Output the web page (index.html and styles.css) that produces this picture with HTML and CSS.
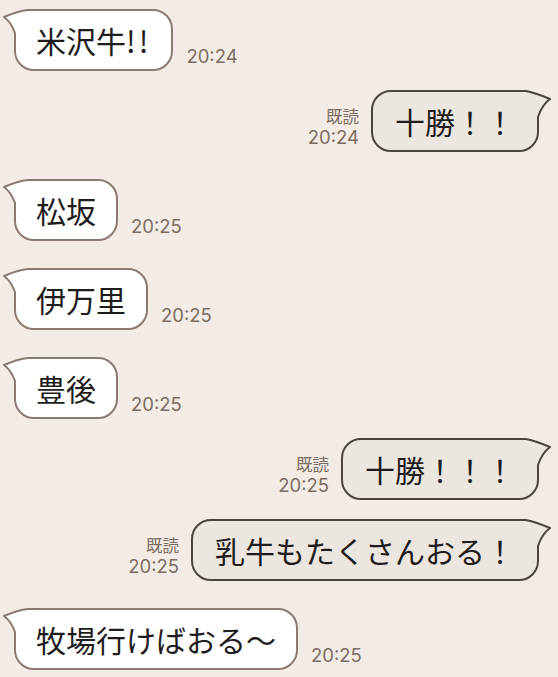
FILE: index.html
```html
<!DOCTYPE html>
<html lang="ja">
<head>
    <meta charset="UTF-8">
    <meta name="viewport" content="width=device-width, initial-scale=1.0">
    <title>トーク</title>
    <link rel="stylesheet" href="styles.css">
</head>
<body>
    <div class="chat">
        <div class="row in">
            <div class="bubble">
                <svg class="tail" viewBox="-14 0 44 32"><path class="fill" d="M22 1 L14 1 Q4 2 -10 8 Q-3 13 1 24 L1 28 Z"/><path class="line" d="M22 1 L14 1 Q4 2 -10 8 Q-3 13 1 24 L1 28"/></svg>
                米沢牛<span class="bang">!!</span>
            </div>
            <span class="time">20:24</span>
        </div>

        <div class="row out">
            <div class="meta"><span>既読</span><span class="time">20:24</span></div>
            <div class="bubble">
                <svg class="tail" viewBox="-14 0 44 32"><path class="fill" d="M22 1 L13 1 Q3 3 -11 9 Q-3 15 1 27 L1 30 Z"/><path class="line" d="M22 1 L13 1 Q3 3 -11 9 Q-3 15 1 27 L1 30"/></svg>
                十勝！！
            </div>
        </div>

        <div class="row in">
            <div class="bubble">
                <svg class="tail" viewBox="-14 0 44 32"><path class="fill" d="M22 1 L14 1 Q4 2 -10 8 Q-3 13 1 24 L1 28 Z"/><path class="line" d="M22 1 L14 1 Q4 2 -10 8 Q-3 13 1 24 L1 28"/></svg>
                松坂
            </div>
            <span class="time">20:25</span>
        </div>

        <div class="row in">
            <div class="bubble">
                <svg class="tail" viewBox="-14 0 44 32"><path class="fill" d="M22 1 L14 1 Q4 2 -10 8 Q-3 13 1 24 L1 28 Z"/><path class="line" d="M22 1 L14 1 Q4 2 -10 8 Q-3 13 1 24 L1 28"/></svg>
                伊万里
            </div>
            <span class="time">20:25</span>
        </div>

        <div class="row in">
            <div class="bubble">
                <svg class="tail" viewBox="-14 0 44 32"><path class="fill" d="M22 1 L14 1 Q4 2 -10 8 Q-3 13 1 24 L1 28 Z"/><path class="line" d="M22 1 L14 1 Q4 2 -10 8 Q-3 13 1 24 L1 28"/></svg>
                豊後
            </div>
            <span class="time">20:25</span>
        </div>

        <div class="row out">
            <div class="meta"><span>既読</span><span class="time">20:25</span></div>
            <div class="bubble">
                <svg class="tail" viewBox="-14 0 44 32"><path class="fill" d="M22 1 L13 1 Q3 3 -11 9 Q-3 15 1 27 L1 30 Z"/><path class="line" d="M22 1 L13 1 Q3 3 -11 9 Q-3 15 1 27 L1 30"/></svg>
                十勝！！！
            </div>
        </div>

        <div class="row out">
            <div class="meta"><span>既読</span><span class="time">20:25</span></div>
            <div class="bubble">
                <svg class="tail" viewBox="-14 0 44 32"><path class="fill" d="M22 1 L13 1 Q3 3 -11 9 Q-3 15 1 27 L1 30 Z"/><path class="line" d="M22 1 L13 1 Q3 3 -11 9 Q-3 15 1 27 L1 30"/></svg>
                乳牛もたくさんおる！
            </div>
        </div>

        <div class="row in">
            <div class="bubble">
                <svg class="tail" viewBox="-14 0 44 32"><path class="fill" d="M22 1 L14 1 Q4 2 -10 8 Q-3 13 1 24 L1 28 Z"/><path class="line" d="M22 1 L14 1 Q4 2 -10 8 Q-3 13 1 24 L1 28"/></svg>
                牧場行けばおる〜
            </div>
            <span class="time">20:25</span>
        </div>
    </div>
</body>
</html>
```

FILE: styles.css
```css
body {
    margin: 0;
    background: #f3ece6;
    font-family: "Noto Sans CJK JP", sans-serif;
    overflow: hidden;
}
.chat {
    display: flex;
    flex-direction: column;
    padding: 9px 19px 0 14px;
}
.row {
    display: flex;
    align-items: flex-end;
    gap: 13px;
}
.row.in {
    margin-top: 27px;
}
.row.out {
    margin-top: 19px;
    justify-content: flex-end;
    gap: 12px;
}
.row:first-child {
    margin-top: 0;
}
.bubble {
    position: relative;
    padding: 13px 20px;
    line-height: 32px;
    font-size: 30px;
    color: #1f1d1c;
    white-space: nowrap;
    border-radius: 20px;
    background: #ffffff;
    border: 2px solid #8a7a71;
}
.bang {
    letter-spacing: 3px;
}
.tail {
    position: absolute;
    top: -2px;
    left: -16px;
    width: 44px;
    height: 32px;
    overflow: visible;
}
.tail .fill {
    fill: #ffffff;
}
.tail .line {
    fill: none;
    stroke: #8a7a71;
    stroke-width: 2;
    stroke-linejoin: round;
    stroke-linecap: round;
}
.out .bubble {
    padding: 13px 22px;
    background: #ece6e0;
    border-color: #4b4541;
}
.out .tail {
    left: auto;
    right: -16px;
    transform: scaleX(-1);
}
.out .tail .fill {
    fill: #ece6e0;
}
.out .tail .line {
    stroke: #4b4541;
}
.time {
    font-family: Inter, "Noto Sans CJK JP", sans-serif;
    font-size: 18.5px;
    line-height: 20px;
    color: #7b6c63;
    margin-bottom: 5px;
}
.meta {
    display: flex;
    flex-direction: column;
    align-items: flex-end;
    margin-bottom: 5px;
    font-size: 16.5px;
    line-height: 21px;
    color: #7b6c63;
}
.meta .time {
    margin-bottom: 0;
}
```
